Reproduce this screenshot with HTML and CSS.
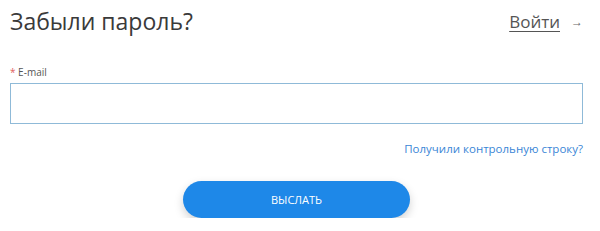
FILE: index.html
```html
<!DOCTYPE html>
<html lang="ru">
<head>
    <meta charset="UTF-8">
    <meta name="viewport" content="width=device-width, initial-scale=1.0">
    <title>Забыли пароль?</title>
    <link rel="stylesheet" href="styles.css">
</head>
<body>
    <div class="form">
        <div class="head">
            <h1 class="title">Забыли пароль?</h1>
            <a class="login" href="#">Войти</a>
            <span class="arrow">&rarr;</span>
        </div>

        <label class="label" for="email"><span class="star">*</span> E-mail</label>
        <input class="field" id="email" type="text">

        <div class="links">
            <a class="code" href="#">Получили контрольную строку?</a>
        </div>

        <div class="actions">
            <button class="send">ВЫСЛАТЬ</button>
        </div>
    </div>
</body>
</html>
```

FILE: styles.css
```css
body{
    margin: 0;
    font-family: 'Open Sans', 'Noto Sans', sans-serif;
    background-color: white;
    color: #444;
}
.form{
    padding: 0 17px 0 10px;
}
.head{
    display: flex;
    align-items: center;
    height: 42px;
}
.title{
    flex: 1;
    margin: 0;
    font-size: 23px;
    font-weight: normal;
    color: #3a3a3a;
}
.login{
    font-size: 17px;
    color: #555;
    text-decoration: underline;
    text-underline-offset: 3px;
}
.arrow{
    margin-left: 11px;
    font-size: 12px;
    color: #666;
}
.label{
    display: block;
    margin-top: 23px;
    font-size: 10px;
    color: #555;
}
.star{
    color: #e06060;
}
.field{
    display: block;
    box-sizing: border-box;
    width: 100%;
    height: 41px;
    margin-top: 4px;
    border: 1px solid #8fbad8;
    outline: none;
}
.links{
    text-align: right;
    margin-top: 12px;
}
.code{
    font-size: 11.5px;
    color: #3a86d6;
    text-decoration: none;
}
.actions{
    display: flex;
    justify-content: center;
    margin-top: 23px;
}
.send{
    width: 227px;
    height: 37px;
    border: none;
    border-radius: 19px;
    background-color: #1e88e8;
    color: white;
    font-family: inherit;
    font-size: 11px;
    box-shadow: 0 4px 10px rgba(0, 0, 0, 0.18);
}
```
